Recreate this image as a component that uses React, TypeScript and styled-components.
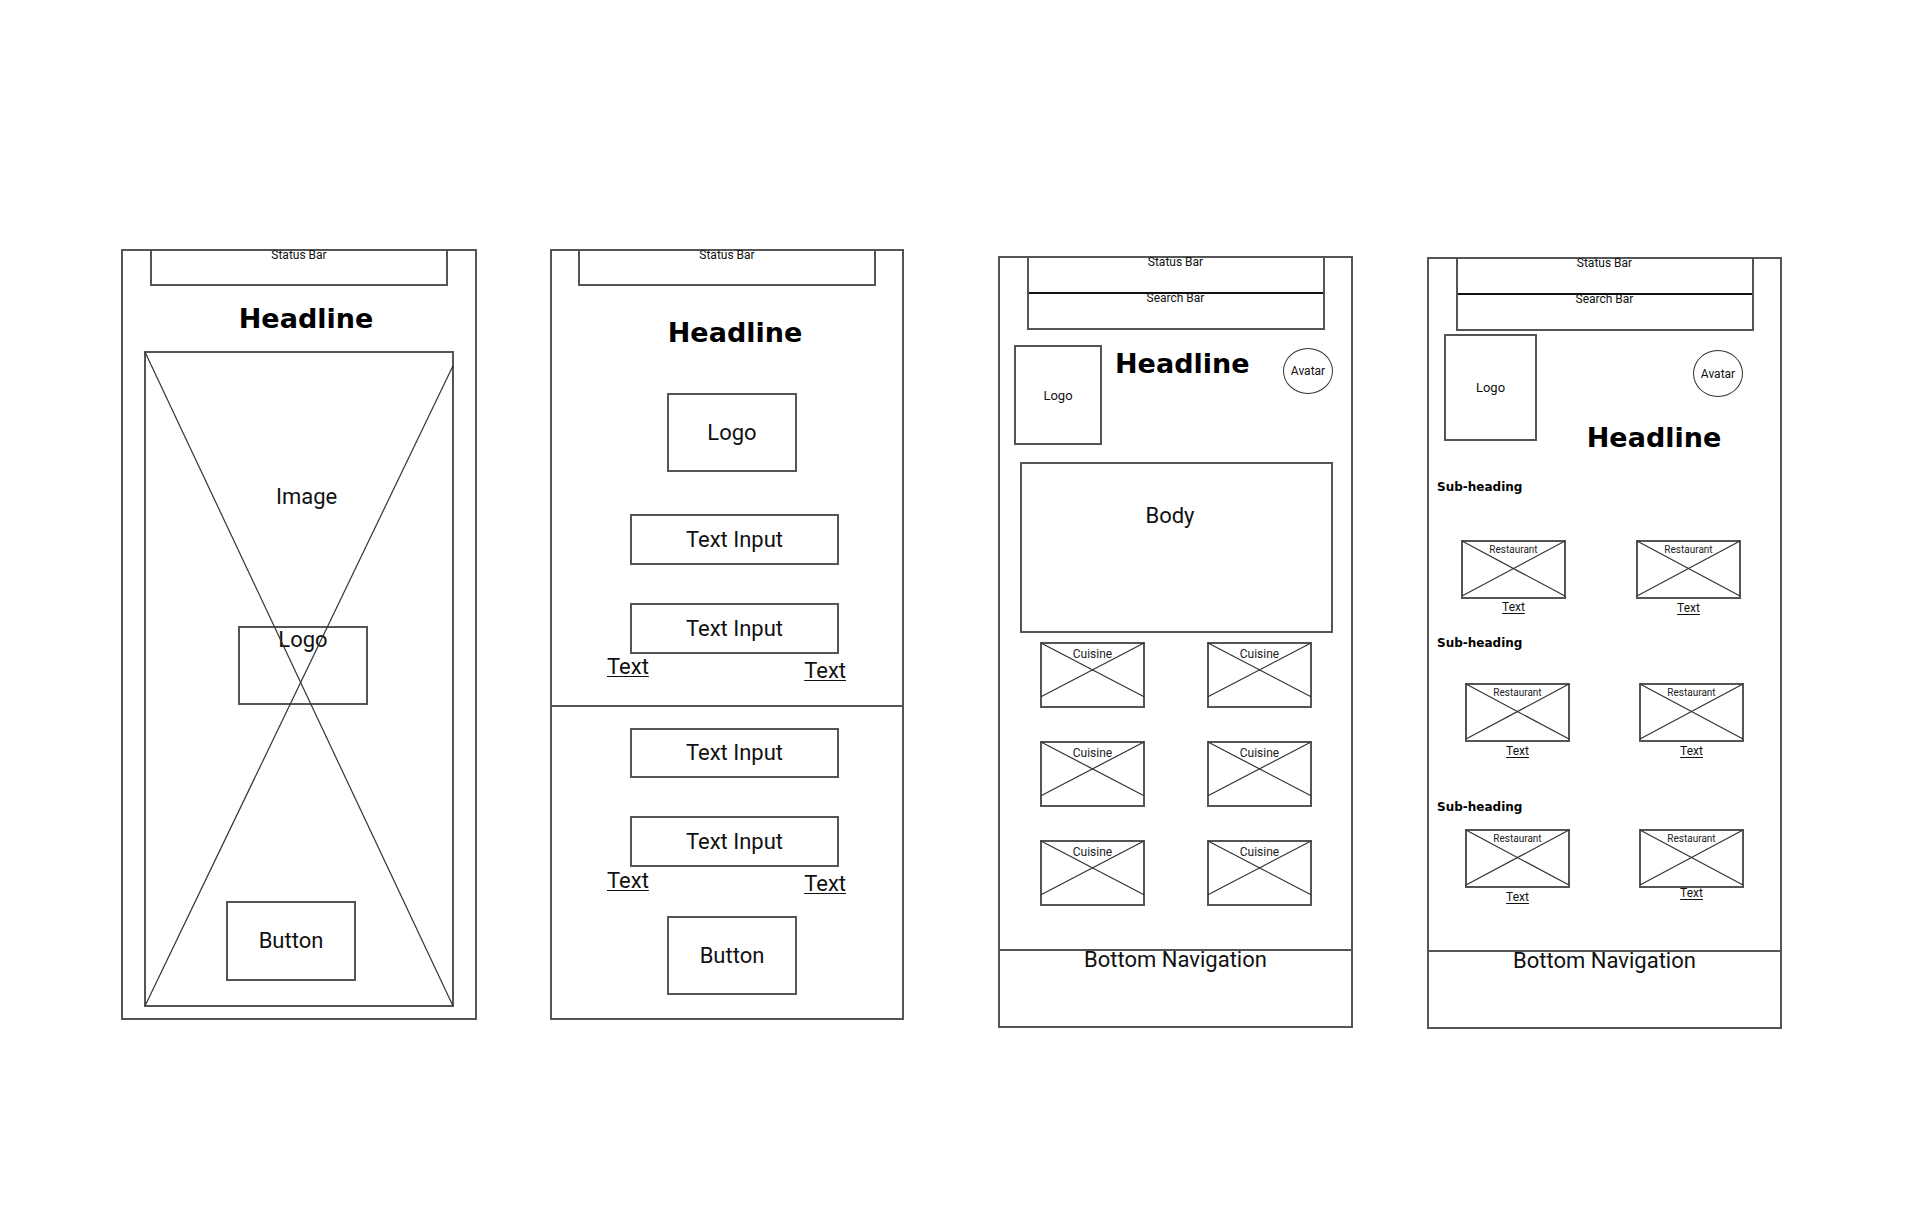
import React from "react";
import styled, { createGlobalStyle, css } from "styled-components";

const LINE = "#555555";
const STROKE = "#333333";

type Space = { $mt?: number; $ml?: number; $mr?: number };

const spacing = css<Space>`
  margin-top: ${(p) => p.$mt ?? 0}px;
  margin-bottom: 0;
  margin-left: ${(p) => p.$ml ?? 0}px;
  margin-right: ${(p) => p.$mr ?? 0}px;
`;

const GlobalStyle = createGlobalStyle`
  html, body {
    margin: 0;
    padding: 0;
    background: #ffffff;
  }
  body {
    font-family: Roboto, "Liberation Sans", sans-serif;
    color: #000000;
  }
`;

const Canvas = styled.div`
  width: 1920px;
  height: 1230px;
  box-sizing: border-box;
  padding: 249px 0 0 121px;
  display: flex;
  align-items: flex-start;
  background: #ffffff;
  overflow: hidden;
`;

const Phone = styled.div<{ $w: number; $h: number; $mt?: number; $ml?: number }>`
  flex-shrink: 0;
  box-sizing: border-box;
  width: ${(p) => p.$w}px;
  height: ${(p) => p.$h}px;
  margin-top: ${(p) => p.$mt ?? 0}px;
  margin-left: ${(p) => p.$ml ?? 0}px;
  border: 2px solid ${LINE};
  display: flex;
  flex-direction: column;
  align-items: flex-start;
`;

const BarStack = styled.div`
  align-self: center;
  margin-top: -2px;
  width: 298px;
  box-sizing: border-box;
  border: 2px solid ${LINE};
`;

const BarCell = styled.div<{ $h: number; $divider?: boolean }>`
  box-sizing: border-box;
  height: ${(p) => p.$h}px;
  border-bottom: ${(p) => (p.$divider ? "2px solid #111" : "none")};
  display: flex;
  flex-direction: column;
  align-items: center;
`;

const BarText = styled.span`
  display: block;
  margin-top: -2px;
  font-family: Roboto, "Liberation Sans", sans-serif;
  font-size: 12px;
  line-height: 12px;
  color: #111;
`;

const Headline = styled.h1<Space & { $offset?: number; $center?: boolean }>`
  ${spacing}
  flex-shrink: 0;
  align-self: ${(p) => (p.$center ? "center" : "flex-start")};
  padding-left: ${(p) => Math.max(0, (p.$offset ?? 0) * 2)}px;
  padding-right: ${(p) => Math.max(0, -(p.$offset ?? 0) * 2)}px;
  font-family: "DejaVu Sans", "Liberation Sans", sans-serif;
  font-weight: 700;
  font-size: 27px;
  line-height: 27px;
  color: #000;
  white-space: nowrap;
`;

const SubHeading = styled.h2<Space>`
  ${spacing}
  font-family: "DejaVu Sans", "Liberation Sans", sans-serif;
  font-weight: 700;
  font-size: 12px;
  line-height: 12px;
  color: #000;
`;

const Outline = styled.div<Space & { $w: number; $h: number; $pad?: number }>`
  ${spacing}
  position: relative;
  flex-shrink: 0;
  box-sizing: border-box;
  width: ${(p) => p.$w}px;
  height: ${(p) => p.$h}px;
  border: 2px solid ${LINE};
  display: flex;
  flex-direction: column;
  align-items: center;
  justify-content: ${(p) => (p.$pad === undefined ? "center" : "flex-start")};
  padding-top: ${(p) => p.$pad ?? 0}px;
`;

const Label = styled.span<{ $size: number; $offset?: number; $mt?: number }>`
  display: block;
  margin-top: ${(p) => p.$mt ?? 0}px;
  margin-left: ${(p) => Math.max(0, (p.$offset ?? 0) * 2)}px;
  margin-right: ${(p) => Math.max(0, -(p.$offset ?? 0) * 2)}px;
  font-family: Roboto, "Liberation Sans", sans-serif;
  font-size: ${(p) => p.$size}px;
  line-height: 1;
  color: #111;
  white-space: nowrap;
`;

const PictureArea = styled.div`
  position: relative;
  align-self: center;
  margin-top: 19px;
  box-sizing: border-box;
  width: 310px;
  height: 656px;
  border: 2px solid ${LINE};
  display: flex;
  flex-direction: column;
  align-items: flex-start;
`;

const PictureLabel = styled(Label)`
  margin-left: 130px;
`;

const CrossSvg = styled.svg`
  position: absolute;
  inset: -1px;
  width: calc(100% + 2px);
  height: calc(100% + 2px);
  overflow: visible;
  pointer-events: none;

  line {
    stroke: ${STROKE};
    stroke-width: 1.2;
    vector-effect: non-scaling-stroke;
  }
`;

function Cross({ reach = 1, tilt = 0 }: { reach?: number; tilt?: number }) {
  return (
    <CrossSvg viewBox="0 0 100 100" preserveAspectRatio="none">
      <line x1="0" y1="0" x2="100" y2={reach * 100} />
      <line x1="0" y1={reach * 100} x2="100" y2={tilt * 100} />
    </CrossSvg>
  );
}

const TextRow = styled.div<{ $mt: number }>`
  align-self: stretch;
  margin-top: ${(p) => p.$mt}px;
  padding: 0 56px 0 55px;
  display: flex;
  justify-content: space-between;
  align-items: flex-start;
`;

const LinkText = styled.span<{ $size: number; $drop?: number }>`
  display: block;
  margin-top: ${(p) => p.$drop ?? 0}px;
  font-family: Roboto, "Liberation Sans", sans-serif;
  font-size: ${(p) => p.$size}px;
  line-height: 1;
  color: #111;
  text-decoration: underline;
  text-decoration-thickness: 1px;
  text-underline-offset: 2px;
`;

const Divider = styled.div<{ $mt: number }>`
  align-self: stretch;
  margin-top: ${(p) => p.$mt}px;
  height: 2px;
  background: ${LINE};
`;

const HeaderRow = styled.div<{ $mt: number }>`
  align-self: stretch;
  margin-top: ${(p) => p.$mt}px;
  display: flex;
  align-items: flex-start;
`;

const HeaderColumn = styled.div`
  flex: 1;
  display: flex;
  flex-direction: column;
  align-items: center;
`;

const Avatar = styled.div<Space & { $h: number; $push?: boolean; $end?: boolean }>`
  ${spacing}
  ${(p) => (p.$push ? "margin-left: auto;" : "")}
  align-self: ${(p) => (p.$end ? "flex-end" : "flex-start")};
  flex-shrink: 0;
  box-sizing: border-box;
  width: 50px;
  height: ${(p) => p.$h}px;
  border: 1.5px solid ${STROKE};
  border-radius: 50%;
  display: flex;
  align-items: center;
  justify-content: center;
  font-family: Roboto, "Liberation Sans", sans-serif;
  font-size: 12px;
  color: #111;
`;

const CuisineGrid = styled.div`
  margin: 9px 0 0 40px;
  display: grid;
  grid-template-columns: repeat(2, 105px);
  column-gap: 62px;
  row-gap: 33px;
`;

const Tile = styled.div<{ $w: number; $h: number }>`
  position: relative;
  box-sizing: border-box;
  width: ${(p) => p.$w}px;
  height: ${(p) => p.$h}px;
  border: 2px solid ${LINE};
  display: flex;
  justify-content: center;
`;

const TileLabel = styled.span<{ $size: number; $pad: number }>`
  display: block;
  margin-top: ${(p) => p.$pad}px;
  font-family: Roboto, "Liberation Sans", sans-serif;
  font-size: ${(p) => p.$size}px;
  line-height: 1;
  color: #222;
`;

const TileRow = styled.div<{ $mt: number; $ml: number; $gap: number }>`
  margin: ${(p) => p.$mt}px 0 0 ${(p) => p.$ml}px;
  display: flex;
  align-items: flex-start;
  gap: ${(p) => p.$gap}px;
`;

const TileItem = styled.div`
  display: flex;
  flex-direction: column;
  align-items: center;
`;

const BottomNav = styled.div`
  margin-top: auto;
  align-self: stretch;
  box-sizing: border-box;
  height: 77px;
  border-top: 2px solid ${LINE};
  text-align: center;
`;

function StatusOnly() {
  return (
    <BarStack>
      <BarCell $h={33}>
        <BarText>Status Bar</BarText>
      </BarCell>
    </BarStack>
  );
}

function StatusAndSearch() {
  return (
    <BarStack>
      <BarCell $h={36} $divider>
        <BarText>Status Bar</BarText>
      </BarCell>
      <BarCell $h={34}>
        <BarText>Search Bar</BarText>
      </BarCell>
    </BarStack>
  );
}

function Restaurant({ cap, drop = 0 }: { cap: number; drop?: number }) {
  return (
    <TileItem>
      <Tile $w={105} $h={59}>
        <TileLabel $size={10} $pad={3}>
          Restaurant
        </TileLabel>
        <Cross reach={0.966} />
      </Tile>
      <LinkText $size={12} $drop={cap + drop}>
        Text
      </LinkText>
    </TileItem>
  );
}

function SplashScreen() {
  return (
    <Phone $w={356} $h={771}>
      <StatusOnly />
      <Headline $mt={19} $center $offset={7}>
        Headline
      </Headline>
      <PictureArea>
        <PictureLabel $size={22} $mt={133}>
          Image
        </PictureLabel>
        <Outline $w={130} $h={79} $mt={118} $ml={92} $pad={1}>
          <Label $size={22}>Logo</Label>
        </Outline>
        <Outline $w={130} $h={80} $mt={196} $ml={80}>
          <Label $size={22}>Button</Label>
        </Outline>
        <Cross reach={1} tilt={0.021} />
      </PictureArea>
    </Phone>
  );
}

function LoginScreen() {
  return (
    <Phone $w={354} $h={771} $ml={73}>
      <StatusOnly />
      <Headline $mt={33} $center $offset={8}>
        Headline
      </Headline>
      <Outline $w={130} $h={79} $mt={47} $ml={115}>
        <Label $size={22}>Logo</Label>
      </Outline>
      <Outline $w={209} $h={51} $mt={42} $ml={78}>
        <Label $size={22}>Text Input</Label>
      </Outline>
      <Outline $w={209} $h={51} $mt={38} $ml={78}>
        <Label $size={22}>Text Input</Label>
      </Outline>
      <TextRow $mt={2}>
        <LinkText $size={22}>Text</LinkText>
        <LinkText $size={22} $drop={4}>
          Text
        </LinkText>
      </TextRow>
      <Divider $mt={23} />
      <Outline $w={209} $h={50} $mt={21} $ml={78}>
        <Label $size={22}>Text Input</Label>
      </Outline>
      <Outline $w={209} $h={51} $mt={38} $ml={78}>
        <Label $size={22}>Text Input</Label>
      </Outline>
      <TextRow $mt={3}>
        <LinkText $size={22}>Text</LinkText>
        <LinkText $size={22} $drop={3}>
          Text
        </LinkText>
      </TextRow>
      <Outline $w={130} $h={79} $mt={21} $ml={115}>
        <Label $size={22}>Button</Label>
      </Outline>
    </Phone>
  );
}

function HomeScreen() {
  return (
    <Phone $w={355} $h={772} $mt={7} $ml={94}>
      <StatusAndSearch />
      <HeaderRow $mt={15}>
        <Outline $w={88} $h={100} $ml={14}>
          <Label $size={13}>Logo</Label>
        </Outline>
        <Headline $mt={5} $ml={13}>
          Headline
        </Headline>
        <Avatar $h={46} $mt={3} $mr={18} $push>
          Avatar
        </Avatar>
      </HeaderRow>
      <Outline $w={313} $h={171} $mt={17} $ml={20} $pad={41}>
        <Label $size={22} $offset={-6.5}>
          Body
        </Label>
      </Outline>
      <CuisineGrid>
        {Array.from({ length: 6 }).map((_, i) => (
          <Tile key={i} $w={105} $h={66}>
            <TileLabel $size={12} $pad={4}>
              Cuisine
            </TileLabel>
            <Cross reach={0.84} />
          </Tile>
        ))}
      </CuisineGrid>
      <BottomNav>
        <Label $size={22} $mt={-2}>
          Bottom Navigation
        </Label>
      </BottomNav>
    </Phone>
  );
}

function ListingScreen() {
  return (
    <Phone $w={355} $h={772} $mt={8} $ml={74}>
      <StatusAndSearch />
      <HeaderRow $mt={3}>
        <Outline $w={93} $h={107} $ml={15}>
          <Label $size={13}>Logo</Label>
        </Outline>
        <HeaderColumn>
          <Avatar $h={47} $mt={16} $mr={37} $end>
            Avatar
          </Avatar>
          <Headline $mt={27} $center $offset={-4.5}>
            Headline
          </Headline>
        </HeaderColumn>
      </HeaderRow>

      <SubHeading $mt={30} $ml={8}>
        Sub-heading
      </SubHeading>
      <TileRow $mt={47} $ml={32} $gap={70}>
        <Restaurant cap={2} />
        <Restaurant cap={2} drop={1} />
      </TileRow>

      <SubHeading $mt={23} $ml={8}>
        Sub-heading
      </SubHeading>
      <TileRow $mt={34} $ml={36} $gap={69}>
        <Restaurant cap={3} />
        <Restaurant cap={3} />
      </TileRow>

      <SubHeading $mt={44} $ml={8}>
        Sub-heading
      </SubHeading>
      <TileRow $mt={16} $ml={36} $gap={69}>
        <Restaurant cap={3} />
        <Restaurant cap={-1} />
      </TileRow>

      <BottomNav>
        <Label $size={22} $mt={-2}>
          Bottom Navigation
        </Label>
      </BottomNav>
    </Phone>
  );
}

export default function App() {
  return (
    <>
      <GlobalStyle />
      <Canvas>
        <SplashScreen />
        <LoginScreen />
        <HomeScreen />
        <ListingScreen />
      </Canvas>
    </>
  );
}
